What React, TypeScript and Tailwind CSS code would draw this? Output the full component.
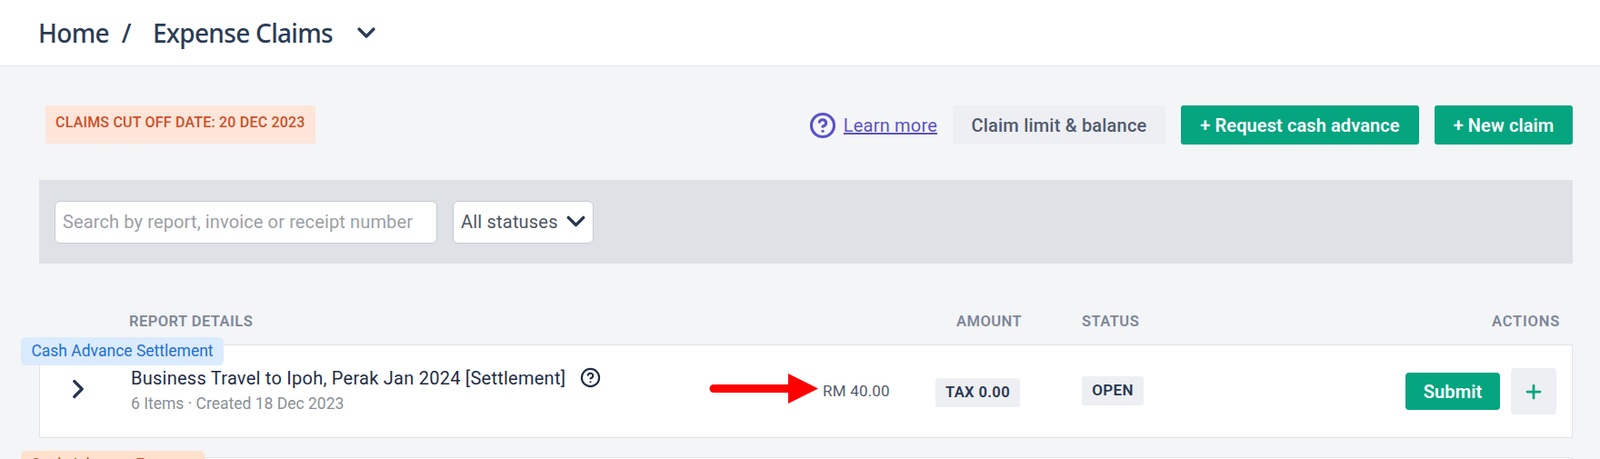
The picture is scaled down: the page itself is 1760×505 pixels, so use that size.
import { ChevronDown, ChevronRight, CircleHelp, Plus } from 'lucide-react'

const columns = 'grid grid-cols-[100px_761px_124px_161px_1fr]'

export default function App() {
  return (
    <div className="h-[505px] overflow-hidden bg-[#f4f5f7] font-['Roboto',sans-serif] text-[#27364f]">
      {/* Breadcrumb */}
      <header className="flex h-[73px] items-center border-b border-[#dfe2e8] bg-white pb-[1px] pl-[42px] font-['Noto_Sans',sans-serif] text-[28px] font-medium tracking-[-0.7px] text-[#2b3c56]">
        <span>Home</span>
        <span className="ml-[14px]">/</span>
        <span className="ml-[24px]">Expense Claims</span>
        <ChevronDown className="ml-[21px] h-[32px] w-[32px]" strokeWidth={2.5} />
      </header>

      <main className="pl-[43px] pr-[30px]">
        {/* Top actions */}
        <div className="mt-[43px] flex items-start pl-[7px]">
          <div className="flex h-[42px] w-[297px] items-start rounded-[3px] bg-[#fee5d9] pl-[11px] pt-[7px] text-[16px] font-medium tracking-[0.2px] text-[#c9512a]">
            CLAIMS CUT OFF DATE: 20 DEC 2023
          </div>
          <div className="ml-auto flex items-center">
            <CircleHelp className="h-[30px] w-[30px] text-[#5a52c7]" strokeWidth={2.5} />
            <a className="ml-[8px] text-[20px] tracking-[0.2px] text-[#5a52c7] underline">Learn more</a>
            <button className="ml-[17px] h-[43px] w-[234px] rounded-[3px] bg-[#eeeff3] text-[20px] font-medium tracking-[0.2px] text-[#505a6e]">
              Claim limit &amp; balance
            </button>
            <button className="ml-[17px] h-[43px] w-[262px] rounded-[3px] bg-[#05a580] text-[20px] font-semibold tracking-[0.1px] text-white">
              + Request cash advance
            </button>
            <button className="ml-[17px] h-[43px] w-[152px] rounded-[3px] bg-[#05a580] text-[20px] font-semibold tracking-[0.1px] text-white">
              + New claim
            </button>
          </div>
        </div>

        {/* Filters */}
        <div className="mt-[39px] flex h-[92px] items-center gap-[17px] bg-[#dee1e6] pl-[17px]">
          <input
            readOnly
            placeholder="Search by report, invoice or receipt number"
            className="h-[47px] w-[421px] rounded-[6px] border border-[#c6cbd3] bg-white px-[8px] pb-[1px] text-[20px] tracking-[0.13px] placeholder:text-[#9b9fa6]"
          />
          <div className="flex h-[47px] w-[155px] items-center rounded-[6px] border border-[#c6cbd3] bg-white pb-[1px] pl-[8px] text-[20px] tracking-[0.2px] text-[#50565f]">
            All statuses
            <ChevronDown className="ml-[3px] h-[33px] w-[33px] text-[#27364f]" strokeWidth={2.5} />
          </div>
        </div>

        {/* Column titles */}
        <div className={`${columns} mt-[52px] h-[37px] text-[16.5px] font-semibold tracking-[0.45px] text-[#7d8799]`}>
          <span />
          <span className="-ml-[1px]">REPORT DETAILS</span>
          <span className="col-span-2 pr-[65px] text-right">AMOUNT</span>
          <div className="flex justify-between pl-[1px] pr-[14px]">
            <span>STATUS</span>
            <span className="tracking-[0.8px]">ACTIONS</span>
          </div>
        </div>

        {/* Settlement report */}
        <div className={`${columns} relative h-[103px] items-center border border-[#dfe2e8] bg-white`}>
          <span className="absolute -left-[21px] -top-[9px] flex h-[31px] w-[223px] items-center justify-center rounded-[5px] bg-[#dbebfe] text-[17.5px] text-[#1f6fd0]">
            Cash Advance Settlement
          </span>
          <ChevronRight className="-mt-[5px] ml-[25px] h-[34px] w-[34px]" strokeWidth={2.25} />
          <div className="pb-[1px]">
            <div className="flex items-center text-[20px] leading-[26px] tracking-[0.25px] text-[#1f2d45]">
              Business Travel to Ipoh, Perak Jan 2024 [Settlement]
              <CircleHelp className="-mt-[1px] ml-[16px] h-[23px] w-[23px]" strokeWidth={2.25} />
            </div>
            <div className="mt-[2px] text-[17.5px] text-[#8a8f98]">6 Items · Created 18 Dec 2023</div>
          </div>
          <span className="text-[17px] tracking-[0.2px] text-[#535c6c]">RM 40.00</span>
          <span className="mt-[3px] flex h-[32px] w-[93px] items-center justify-center rounded-[3px] bg-[#eeeff3] text-[16.5px] font-semibold tracking-[0.4px]">
            TAX 0.00
          </span>
          <div className="flex items-center pr-[17px]">
            <span className="-mt-[2px] flex h-[32px] w-[68px] items-center justify-center rounded-[3px] bg-[#eeeff3] text-[17px] font-semibold tracking-[0.3px]">
              OPEN
            </span>
            <button className="ml-auto h-[41px] w-[104px] rounded-[4px] bg-[#05a580] text-[20px] font-semibold tracking-[0.1px] text-white">
              Submit
            </button>
            <button className="ml-[12px] flex h-[51px] w-[50px] items-center justify-center rounded-[4px] bg-[#eeeff3] text-[#05a580]">
              <Plus className="h-[24px] w-[24px]" strokeWidth={2.75} />
            </button>
          </div>

          {/* Red annotation arrow */}
          <svg className="absolute left-[735px] top-[31px]" width="122" height="34" viewBox="0 0 122 34">
            <path d="M6 12H88V0L121 16.5L88 33V21H6a4.5 4.5 0 0 1 0-9Z" fill="#fe0000" />
          </svg>
        </div>

        {/* Next report, cut off by the bottom of the window */}
        <div className="relative mt-[21px] h-[40px] border border-[#dfe2e8] bg-white">
          <span className="absolute -left-[21px] -top-[8px] flex h-[31px] w-[202px] items-center justify-center rounded-[5px] bg-[#fee1cc] text-[17.5px] text-[#c9512a]">
            Cash Advance Expense
          </span>
        </div>
      </main>
    </div>
  )
}
